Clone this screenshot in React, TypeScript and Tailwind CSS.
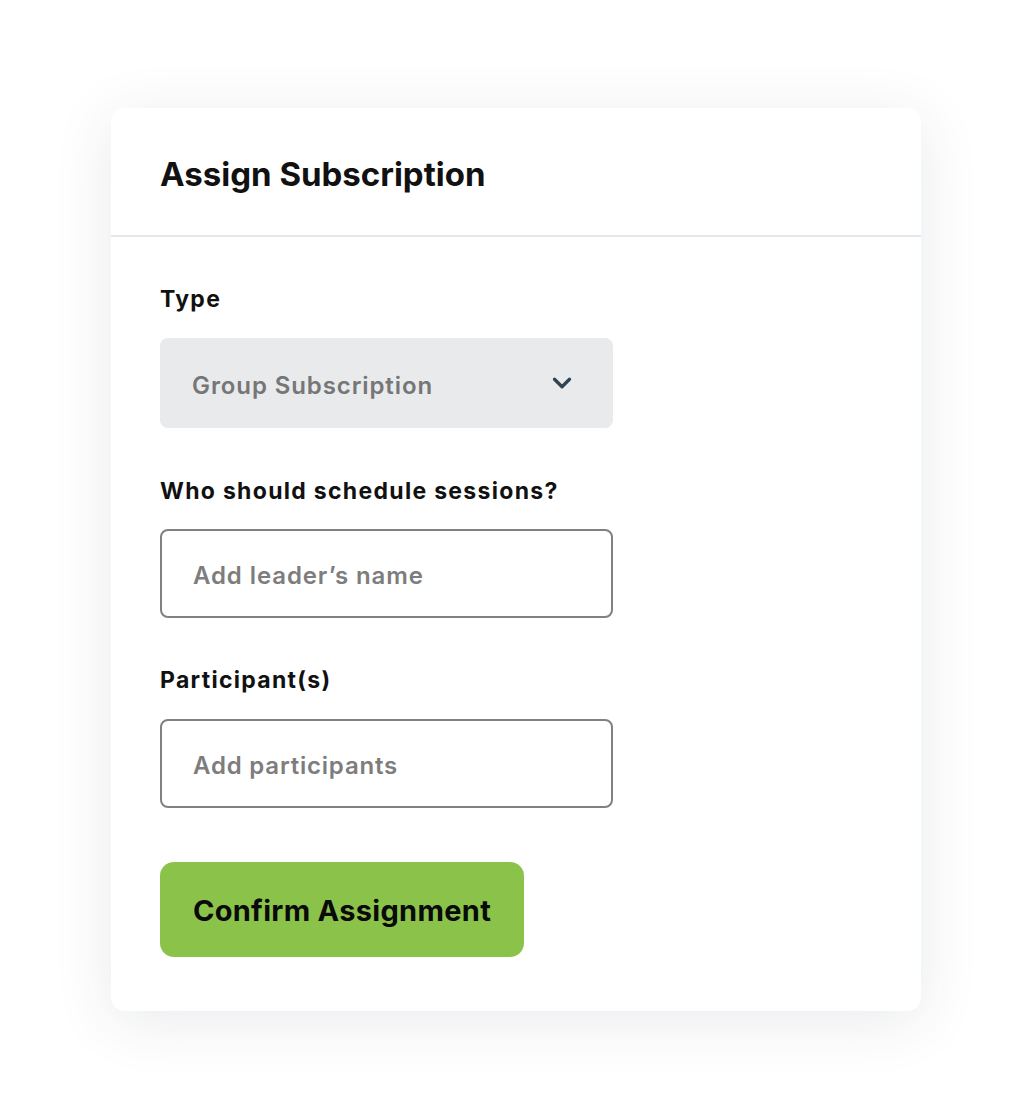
import { ChevronDown } from "lucide-react"

export default function App() {
  return (
    <div className="min-h-[1106px] w-full bg-white pt-[108px] pl-[111px]" style={{ fontFamily: "Inter, 'Noto Sans', sans-serif" }}>
      <div className="w-[810px] rounded-[14px] bg-white shadow-[0_10px_60px_rgba(40,45,70,0.10)]">
        {/* Header */}
        <div className="h-[129px] border-b-2 border-[#e6e7e9] pl-[49px] flex items-center">
          <h1 className="text-[33px] font-bold text-[#111] leading-none pt-[5px]">Assign Subscription</h1>
        </div>

        {/* Body */}
        <div className="pl-[49px] pt-[48px] pb-[54px]">
          <label className="block text-[23px] leading-[28px] font-bold tracking-[1.3px] text-[#111]">Type</label>
          <button className="mt-[25px] w-[453px] h-[90px] rounded-[8px] bg-[#e9eaec] flex items-center justify-between pl-[32px] pr-[36px]">
            <span className="pt-[5px] text-[24px] text-[#767676] font-semibold tracking-[0.9px]">Group Subscription</span>
            <ChevronDown className="w-[30px] h-[30px] text-[#2e4454]" strokeWidth={2.6} />
          </button>

          <label className="block mt-[49px] text-[23px] leading-[28px] font-bold tracking-[1.3px] text-[#111]">Who should schedule sessions?</label>
          <div className="mt-[24px] w-[453px] h-[89px] rounded-[8px] border-2 border-[#818181] flex items-center pl-[31px]">
            <span className="pt-[4px] text-[24px] text-[#7d7d7d] font-semibold tracking-[0.9px]">Add leader’s name</span>
          </div>

          <label className="block mt-[48px] text-[23px] leading-[28px] font-bold tracking-[1.3px] text-[#111]">Participant(s)</label>
          <div className="mt-[25px] w-[453px] h-[89px] rounded-[8px] border-2 border-[#818181] flex items-center pl-[31px]">
            <span className="pt-[4px] text-[24px] text-[#7d7d7d] font-semibold tracking-[0.8px]">Add participants</span>
          </div>

          <button className="mt-[54px] w-[364px] h-[95px] rounded-[14px] bg-[#8bc34a] flex items-center justify-center">
            <span className="pt-[2px] text-[29px] font-bold tracking-[0.3px] text-[#0a0a0a]">Confirm Assignment</span>
          </button>
        </div>
      </div>
    </div>
  )
}
